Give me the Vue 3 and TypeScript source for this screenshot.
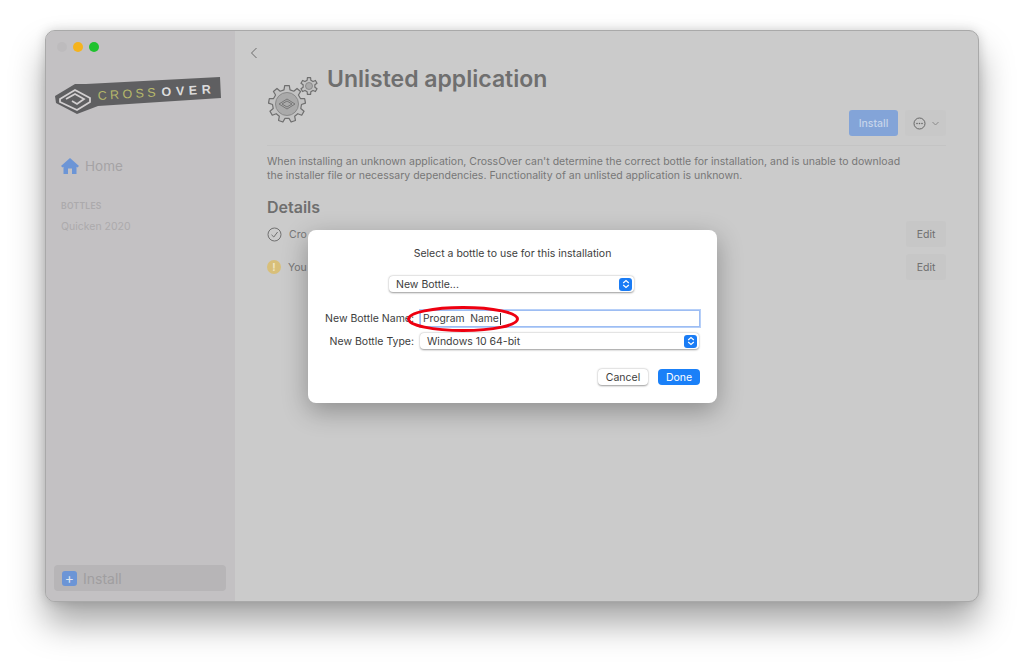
<script setup lang="ts">
function gearPath(teeth: number, rOut: number, rIn: number): string {
  const step = (Math.PI * 2) / teeth
  const pts: string[] = []
  for (let i = 0; i < teeth; i++) {
    const a = i * step - Math.PI / 2
    const corners: [number, number][] = [
      [rIn, a - step * 0.3],
      [rOut, a - step * 0.18],
      [rOut, a + step * 0.18],
      [rIn, a + step * 0.3],
    ]
    for (const [r, t] of corners) {
      pts.push(`${(r * Math.cos(t)).toFixed(2)} ${(r * Math.sin(t)).toFixed(2)}`)
    }
  }
  return `M${pts.join(' L')} Z`
}
const bigGear = gearPath(9, 18.5, 14.5)
const smallGear = gearPath(6, 8.5, 6)
const rows = [
  { kind: 'ok', text: 'Cro' },
  { kind: 'warn', text: 'You' },
]
</script>

<template>
  <div class="page">
    <div class="window">
      <aside class="sidebar">
        <div class="lights">
          <span class="light grey"></span>
          <span class="light yellow"></span>
          <span class="light green"></span>
        </div>
        <svg class="logo" width="170" height="46" viewBox="0 0 170 46">
          <path d="M1 25 L21 13 L32 13 L166 6 L167 27 L44 35 L23 43 L2 32 Z" fill="#5f5f61" />
          <g fill="none" stroke="#d2cfd0" stroke-width="1.8">
            <path d="M6 28 L21 19 L36 27 V31 L23 39 L6 31 Z" />
            <path d="M12 28 L21 23 L30 28 L23 33 L18 30" />
          </g>
          <g transform="rotate(-3.4 45 30)">
            <text class="logo-thin" x="44" y="29">CROSS</text>
            <text class="logo-bold" x="108" y="29">OVER</text>
          </g>
        </svg>
        <div class="home">
          <svg width="18" height="16" viewBox="0 0 18 16">
            <path d="M9 0 L18 8 L16.4 9.4 L15.5 8.7 V16 H11 V10.5 H7 V16 H2.5 V8.7 L1.6 9.4 L0 8 Z" fill="#6c95d6" />
          </svg>
          <span>Home</span>
        </div>
        <div class="section">BOTTLES</div>
        <div class="bottle">Quicken 2020</div>
        <div class="spacer"></div>
        <div class="side-install">
          <span class="plus">+</span>
          <span>Install</span>
        </div>
      </aside>

      <main class="main">
        <svg class="back" width="8" height="12" viewBox="0 0 8 12">
          <path d="M6.5 1 L1.5 6 L6.5 11" fill="none" stroke="#6a6a6a" stroke-width="1" />
        </svg>
        <div class="head">
          <svg class="gear" width="51" height="46" viewBox="0 0 51 46">
            <g transform="translate(19 27)">
              <path :d="bigGear" fill="#c2c2c2" stroke="#6f6f6f" stroke-width="1.2" stroke-linejoin="round" />
              <circle r="11.5" fill="#aaaaaa" stroke="#8a8a8a" stroke-width="1" />
              <g fill="none" stroke="#707070" stroke-width="0.9">
                <path d="M-8 0 L0 -5 L8 0 L0 5 Z" />
                <path d="M-5 0 L0 -3 L5 0 L0 3 Z" />
              </g>
            </g>
            <g transform="translate(41 9)">
              <path :d="smallGear" fill="#c2c2c2" stroke="#6f6f6f" stroke-width="1.2" stroke-linejoin="round" />
              <circle r="3.5" fill="#aaaaaa" stroke="#808080" stroke-width="0.8" />
            </g>
          </svg>
          <h1>Unlisted application</h1>
        </div>
        <div class="actions">
          <button class="install">Install</button>
          <div class="more">
            <svg width="13" height="13" viewBox="0 0 13 13">
              <circle cx="6.5" cy="6.5" r="5.5" fill="none" stroke="#666" stroke-width="1" />
              <circle cx="4" cy="6.5" r="0.8" fill="#666" />
              <circle cx="6.5" cy="6.5" r="0.8" fill="#666" />
              <circle cx="9" cy="6.5" r="0.8" fill="#666" />
            </svg>
            <svg width="7" height="5" viewBox="0 0 7 5">
              <path d="M0.5 1 L3.5 4 L6.5 1" fill="none" stroke="#8a8a8a" stroke-width="1" />
            </svg>
          </div>
        </div>
        <p class="desc">
          When installing an unknown application, CrossOver can't determine the correct bottle for installation, and is unable to download<br />
          the installer file or necessary dependencies. Functionality of an unlisted application is unknown.
        </p>
        <h2>Details</h2>
        <div v-for="r in rows" :key="r.kind" class="row">
          <svg v-if="r.kind === 'ok'" width="15" height="15" viewBox="0 0 15 15">
            <circle cx="7.5" cy="7.5" r="6.5" fill="none" stroke="#707070" stroke-width="1" />
            <path d="M4.5 7.8 L6.8 10 L10.6 5" fill="none" stroke="#707070" stroke-width="1" />
          </svg>
          <span v-else class="warn">!</span>
          <span class="row-text">{{ r.text }}</span>
          <button class="edit">Edit</button>
        </div>
      </main>

      <div class="modal">
        <div class="modal-title">Select a bottle to use for this installation</div>
        <div class="select top-select">
          <span>New Bottle...</span>
          <span class="stepper">
            <svg width="8" height="10" viewBox="0 0 8 10">
              <path d="M1.2 4 L4 1.5 L6.8 4 M1.2 6 L4 8.5 L6.8 6" fill="none" stroke="#fff" stroke-width="1.2" />
            </svg>
          </span>
        </div>
        <div class="form">
          <label>New Bottle Name:</label>
          <div class="input">Program&nbsp; Name<i class="caret"></i></div>
          <label>New Bottle Type:</label>
          <div class="select">
            <span>Windows 10 64-bit</span>
            <span class="stepper">
              <svg width="8" height="10" viewBox="0 0 8 10">
                <path d="M1.2 4 L4 1.5 L6.8 4 M1.2 6 L4 8.5 L6.8 6" fill="none" stroke="#fff" stroke-width="1.2" />
              </svg>
            </span>
          </div>
        </div>
        <div class="modal-actions">
          <button class="cancel">Cancel</button>
          <button class="done">Done</button>
        </div>
        <svg class="oval" width="114" height="28" viewBox="0 0 114 28">
          <ellipse cx="57" cy="14" rx="54.5" ry="11.5" fill="none" stroke="#ee0010" stroke-width="3" />
        </svg>
      </div>
    </div>
  </div>
</template>

<style scoped>
.page {
  width: 1024px;
  height: 663px;
  box-sizing: border-box;
  padding: 30px 45px 0;
  background: #fff;
  font-family: Inter, "Noto Sans", sans-serif;
  overflow: hidden;
}
.window {
  position: relative;
  width: 934px;
  height: 572px;
  box-sizing: border-box;
  display: flex;
  border-radius: 10px;
  border: 1px solid #a9a9a9;
  background: #cbcbcb;
  overflow: visible;
  box-shadow: 0 22px 34px rgba(0, 0, 0, 0.34), 0 0 12px rgba(0, 0, 0, 0.16);
}
.sidebar {
  width: 189px;
  flex: none;
  box-sizing: border-box;
  display: flex;
  flex-direction: column;
  padding: 11px 9px 10px 8px;
  background: #c3c1c3;
  border-radius: 9px 0 0 9px;
}
.lights {
  display: flex;
  gap: 6px;
  padding-left: 3px;
}
.light {
  width: 10px;
  height: 10px;
  border-radius: 50%;
}
.grey { background: #bdbbbd; }
.yellow { background: #f5b31d; }
.green { background: #1fc22e; }
.logo {
  margin-top: 19px;
  flex: none;
  display: block;
}
.logo-thin,
.logo-bold {
  font-family: "Liberation Sans", sans-serif;
  font-size: 12.5px;
  letter-spacing: 3.4px;
}
.logo-thin { fill: #b6b86b; }
.logo-bold {
  fill: #dcdcdc;
  font-weight: 700;
  letter-spacing: 4.6px;
}
.home {
  margin-top: 41px;
  padding-left: 7px;
  display: flex;
  align-items: center;
  gap: 6px;
  font-size: 13.5px;
  color: #a5a3a5;
}
.section {
  margin-top: 27px;
  padding-left: 7px;
  font-size: 8.5px;
  font-weight: 600;
  color: #acaaac;
  letter-spacing: 0.3px;
}
.bottle {
  margin-top: 9px;
  padding-left: 7px;
  font-size: 10.5px;
  color: #acaaac;
}
.spacer { flex: 1; }
.side-install {
  height: 26px;
  border-radius: 4px;
  background: #b7b5b7;
  display: flex;
  align-items: center;
  gap: 6px;
  padding-left: 8px;
  font-size: 14px;
  color: #a09ea0;
}
.plus {
  width: 15px;
  height: 15px;
  border-radius: 3px;
  background: #6c95d6;
  color: #dfe6f2;
  display: flex;
  align-items: center;
  justify-content: center;
  font-size: 14px;
  line-height: 1;
}
.main {
  flex: 1;
  box-sizing: border-box;
  padding: 16px 32px 0;
  min-width: 0;
  color: #6f6f6f;
}
.back {
  display: block;
  margin-left: -17px;
}
.head {
  display: flex;
  margin-top: 2px;
  height: 65px;
}
.gear {
  flex: none;
  margin-top: 16px;
  margin-left: 1px;
}
h1 {
  margin: 4px 0 0 8px;
  font-size: 23px;
  line-height: 28px;
  font-weight: 600;
  color: #6f6f6f;
}
.actions {
  display: flex;
  justify-content: flex-end;
  align-items: center;
  gap: 7px;
  height: 26px;
  margin-top: -16px;
  padding-bottom: 9px;
  border-bottom: 1px solid #c4c4c4;
}
.install {
  width: 49px;
  height: 26px;
  border: 0;
  border-radius: 3px;
  background: #83a4d8;
  color: #c6d4ea;
  font: 500 10.5px Inter, sans-serif;
  padding: 0;
}
.more {
  width: 41px;
  height: 26px;
  border-radius: 3px;
  background: #c8c8c8;
  display: flex;
  align-items: center;
  justify-content: center;
  gap: 6px;
}
.desc {
  margin: 9px 0 0;
  font-size: 10.5px;
  line-height: 14px;
  white-space: nowrap;
  color: #777;
}
h2 {
  margin: 14px 0 0;
  font-size: 16px;
  line-height: 20px;
  font-weight: 600;
  color: #6f6f6f;
}
.row {
  display: flex;
  align-items: center;
  height: 26px;
  font-size: 10.5px;
  color: #777;
}
.row + .row { margin-top: 7px; }
h2 + .row { margin-top: 4px; }
.row-text {
  margin-left: 7px;
  flex: 1;
}
.warn {
  width: 14px;
  height: 14px;
  border-radius: 50%;
  background: #d8bf79;
  color: #f1e6c4;
  display: flex;
  align-items: center;
  justify-content: center;
  font-size: 10px;
  font-weight: 700;
}
.edit {
  width: 40px;
  height: 26px;
  border: 0;
  border-radius: 3px;
  background: #c7c7c7;
  color: #6f6f6f;
  font: 10.5px Inter, sans-serif;
  padding: 0;
}
.modal {
  position: absolute;
  left: 262px;
  top: 199px;
  width: 409px;
  height: 173px;
  box-sizing: border-box;
  padding: 17px 16px 0;
  background: #fff;
  border-radius: 8px;
  box-shadow: 0 8px 26px rgba(0, 0, 0, 0.3);
  font-size: 10.5px;
  color: #3d3d3d;
}
.modal-title {
  text-align: center;
  line-height: 14px;
}
.select {
  height: 16px;
  border-radius: 4px;
  background: #fff;
  box-shadow: 0 0.5px 2px rgba(0, 0, 0, 0.4);
  display: flex;
  align-items: center;
  justify-content: space-between;
  padding: 0 2px 0 7px;
}
.top-select {
  width: 245px;
  box-sizing: border-box;
  margin: 15px 0 0 65px;
}
.stepper {
  width: 13px;
  height: 13px;
  border-radius: 3px;
  background: #1a7cf5;
  display: flex;
  align-items: center;
  justify-content: center;
}
.form {
  display: grid;
  grid-template-columns: 90px 279px;
  column-gap: 6px;
  row-gap: 6px;
  align-items: center;
  margin-top: 18px;
}
.form label {
  text-align: right;
  white-space: nowrap;
}
.input {
  height: 17px;
  width: 280px;
  box-sizing: border-box;
  border: 1px solid #9dbdf3;
  box-shadow: 0 0 0 1px #b6cff8;
  padding-left: 2px;
  font-size: 10.3px;
  line-height: 15px;
  display: flex;
  align-items: center;
}
.caret {
  width: 1px;
  height: 12px;
  background: #333;
  margin-left: 1px;
}
.modal-actions {
  display: flex;
  justify-content: flex-end;
  gap: 10px;
  margin-top: 20px;
  padding-right: 1px;
}
.cancel,
.done {
  height: 16px;
  border: 0;
  border-radius: 4px;
  font: 10.5px Inter, sans-serif;
  padding: 0;
}
.cancel {
  width: 50px;
  background: #fff;
  color: #3d3d3d;
  box-shadow: 0 0.5px 2px rgba(0, 0, 0, 0.4);
}
.done {
  width: 42px;
  background: #1a80f8;
  color: #fff;
}
.oval {
  position: absolute;
  left: 98px;
  top: 75px;
}
</style>
